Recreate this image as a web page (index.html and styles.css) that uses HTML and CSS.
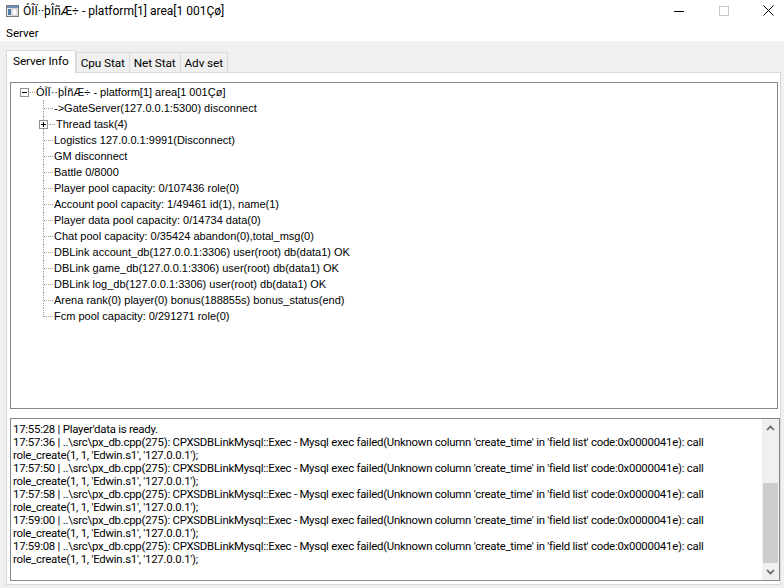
FILE: index.html
```html
<!DOCTYPE html>
<html lang="en">
<head>
  <meta charset="UTF-8" />
  <title>ÓÎÏ··þÎñÆ÷ - platform[1] area[1 001Çø]</title>
  <link rel="stylesheet" href="styles.css">
</head>
<body>

  <div class="titlebar">
    <svg class="app-icon" width="13" height="12" viewBox="0 0 13 12">
      <rect x="0.5" y="0.5" width="12" height="11" fill="#e8e8e8" stroke="#7a7a7a"/>
      <rect x="1" y="1" width="11" height="2" fill="#6a8fb8"/>
      <rect x="2" y="4" width="3" height="6" fill="#4f7db0"/>
      <rect x="6" y="4" width="5" height="6" fill="#ffffff" stroke="#9a9a9a" stroke-width="0.5"/>
    </svg>
    <span class="title">ÓÎÏ··þÎñÆ÷ - platform[1] area[1 001Çø]</span>
    <div class="controls">
      <span class="ctl"><svg width="10" height="10" viewBox="0 0 10 10"><path d="M0 5.5H10" stroke="#000" stroke-width="1"/></svg></span>
      <span class="ctl"><svg width="10" height="10" viewBox="0 0 10 10"><rect x="0.5" y="0.5" width="9" height="9" fill="none" stroke="#c9c9c9"/></svg></span>
      <span class="ctl"><svg width="11" height="11" viewBox="0 0 11 11"><path d="M0.5 0.5L10.5 10.5M10.5 0.5L0.5 10.5" stroke="#000" stroke-width="1"/></svg></span>
    </div>
  </div>

  <div class="menubar">
    <span class="menu-item">Server</span>
  </div>

  <div class="main">
    <div class="tabs">
      <div class="tab active">Server Info</div>
      <div class="tab">Cpu Stat</div>
      <div class="tab">Net Stat</div>
      <div class="tab">Adv set</div>
    </div>

    <div class="panel">
      <div class="tree-box">
        <div class="row root">
          <svg class="expander" width="9" height="9" viewBox="0 0 9 9"><rect x="0.5" y="0.5" width="8" height="8" fill="#fff" stroke="#919191"/><path d="M2 4.5H7" stroke="#000"/></svg>
          <span class="hline short"></span>
          <span class="label">ÓÎÏ··þÎñÆ÷ - platform[1] area[1 001Çø]</span>
        </div>

        <div class="row"><span class="conn"><i></i></span><span class="label">-&gt;GateServer(127.0.0.1:5300) disconnect</span></div>
        <div class="row">
          <span class="exp">
            <i class="seg top"></i>
            <svg class="expander" width="9" height="9" viewBox="0 0 9 9"><rect x="0.5" y="0.5" width="8" height="8" fill="#fff" stroke="#919191"/><path d="M2 4.5H7M4.5 2V7" stroke="#000"/></svg>
            <i class="seg bottom"></i>
          </span>
          <span class="hline"></span>
          <span class="label">Thread task(4)</span>
        </div>
        <div class="row"><span class="conn"><i></i></span><span class="label">Logistics 127.0.0.1:9991(Disconnect)</span></div>
        <div class="row"><span class="conn"><i></i></span><span class="label">GM disconnect</span></div>
        <div class="row"><span class="conn"><i></i></span><span class="label">Battle 0/8000</span></div>
        <div class="row"><span class="conn"><i></i></span><span class="label">Player pool capacity: 0/107436 role(0)</span></div>
        <div class="row"><span class="conn"><i></i></span><span class="label">Account pool capacity: 1/49461 id(1), name(1)</span></div>
        <div class="row"><span class="conn"><i></i></span><span class="label">Player data pool capacity: 0/14734 data(0)</span></div>
        <div class="row"><span class="conn"><i></i></span><span class="label">Chat pool capacity: 0/35424 abandon(0),total_msg(0)</span></div>
        <div class="row"><span class="conn"><i></i></span><span class="label">DBLink account_db(127.0.0.1:3306) user(root) db(data1) OK</span></div>
        <div class="row"><span class="conn"><i></i></span><span class="label">DBLink game_db(127.0.0.1:3306) user(root) db(data1) OK</span></div>
        <div class="row"><span class="conn"><i></i></span><span class="label">DBLink log_db(127.0.0.1:3306) user(root) db(data1) OK</span></div>
        <div class="row"><span class="conn"><i></i></span><span class="label">Arena rank(0) player(0) bonus(188855s) bonus_status(end)</span></div>
        <div class="row"><span class="conn last"><i></i></span><span class="label">Fcm pool capacity: 0/291271 role(0)</span></div>
      </div>

      <div class="log-box">
        <div class="log-text">
          <div>17:55:28 | Player'data is ready.</div>
          <div>17:57:36 | ..\src\px_db.cpp(275): CPXSDBLinkMysql::Exec - Mysql exec failed(Unknown column 'create_time' in 'field list' code:0x0000041e): call<br>role_create(1, 1, 'Edwin.s1', '127.0.0.1');</div>
          <div>17:57:50 | ..\src\px_db.cpp(275): CPXSDBLinkMysql::Exec - Mysql exec failed(Unknown column 'create_time' in 'field list' code:0x0000041e): call<br>role_create(1, 1, 'Edwin.s1', '127.0.0.1');</div>
          <div>17:57:58 | ..\src\px_db.cpp(275): CPXSDBLinkMysql::Exec - Mysql exec failed(Unknown column 'create_time' in 'field list' code:0x0000041e): call<br>role_create(1, 1, 'Edwin.s1', '127.0.0.1');</div>
          <div>17:59:00 | ..\src\px_db.cpp(275): CPXSDBLinkMysql::Exec - Mysql exec failed(Unknown column 'create_time' in 'field list' code:0x0000041e): call<br>role_create(1, 1, 'Edwin.s1', '127.0.0.1');</div>
          <div>17:59:08 | ..\src\px_db.cpp(275): CPXSDBLinkMysql::Exec - Mysql exec failed(Unknown column 'create_time' in 'field list' code:0x0000041e): call<br>role_create(1, 1, 'Edwin.s1', '127.0.0.1');</div>
        </div>
        <div class="vscroll">
          <div class="arrow"><svg width="9" height="6" viewBox="0 0 9 6"><path d="M1 5L4.5 1.5L8 5" fill="none" stroke="#606060" stroke-width="1.6"/></svg></div>
          <div class="track"><div class="thumb"></div></div>
          <div class="arrow"><svg width="9" height="6" viewBox="0 0 9 6"><path d="M1 1L4.5 4.5L8 1" fill="none" stroke="#606060" stroke-width="1.6"/></svg></div>
        </div>
      </div>
    </div>
  </div>

</body>
</html>
```
FILE: styles.css
```css
body {
  margin: 0;
  width: 784px;
  height: 588px;
  overflow: hidden;
  background: #f0f0f0;
  font-family: Roboto, "Liberation Sans", sans-serif;
  font-size: 11.2px;
  letter-spacing: -0.15px;
  color: #000;
}

/* window chrome */
.titlebar {
  height: 21px;
  background: #fff;
  display: flex;
  align-items: center;
}

.app-icon {
  margin-left: 6px;
  margin-right: 4px;
}

.title {
  font-size: 12px;
  letter-spacing: 0;
  flex: 1;
}

.controls {
  display: flex;
  margin-right: -7px;
}

.ctl {
  width: 45px;
  height: 21px;
  display: flex;
  align-items: center;
  justify-content: center;
}

.menubar {
  box-sizing: border-box;
  height: 20px;
  padding-top: 3px;
  background: #fff;
  display: flex;
  align-items: center;
}

.menu-item {
  padding-left: 6px;
  font-size: 11.6px;
  letter-spacing: 0;
}

/* tab control */
.main {
  padding: 9px 3px 4px 6px;
}

.tabs {
  display: flex;
  height: 22px;
  padding-left: 1px;
}

.tab {
  box-sizing: border-box;
  height: 20px;
  margin-top: 2px;
  border: 1px solid #d9d9d9;
  border-bottom: none;
  margin-left: -1px;
  padding: 0 4px 0 4px;
  display: flex;
  align-items: center;
  background: #f0f0f0;
  font-size: 11.8px;
  letter-spacing: -0.1px;
}

.tab.active {
  position: relative;
  z-index: 1;
  margin-top: 0;
  margin-left: -1px;
  height: 23px;
  padding: 0 6px 2px 6px;
  background: #fff;
}

.tab:nth-child(2) {
  margin-left: 0;
}

.panel {
  box-sizing: border-box;
  height: 513px;
  border: 1px solid #d9d9d9;
  background: #fff;
  padding: 9px 0 3px 3px;
}

/* tree view */
.tree-box {
  box-sizing: border-box;
  height: 327px;
  margin-right: 2px;
  border: 1px solid #828790;
  padding: 1px 0 0 9px;
  font-family: "Liberation Sans", Arial, sans-serif;
  font-size: 11px;
  letter-spacing: 0;
}

.row {
  display: flex;
  height: 16px;
  line-height: 16px;
  white-space: nowrap;
}

.root .expander {
  margin-top: 4px;
}

.hline {
  box-sizing: border-box;
  width: 6px;
  height: 9px;
  border-bottom: 1px dotted #a0a0a0;
  margin-right: 1px;
}

.hline.short {
  width: 5px;
  margin-left: 1px;
  margin-right: 1px;
}

.conn {
  box-sizing: border-box;
  width: 11px;
  height: 16px;
  margin-left: 23px;
  border-left: 1px dotted #a0a0a0;
}

.conn.last {
  height: 9px;
}

.conn i {
  display: block;
  box-sizing: border-box;
  height: 9px;
  width: 9px;
  border-bottom: 1px dotted #a0a0a0;
}

.exp {
  display: flex;
  flex-direction: column;
  width: 9px;
  margin-left: 19px;
  margin-right: 1px;
}

.seg {
  display: block;
  width: 0;
  margin-left: 4px;
  border-left: 1px dotted #a0a0a0;
}

.seg.top {
  height: 4px;
}

.seg.bottom {
  height: 3px;
}

/* log output */
.log-box {
  box-sizing: border-box;
  height: 163px;
  margin-top: 9px;
  border: 1px solid #828790;
  display: flex;
}

.log-text {
  flex: 1;
  overflow: hidden;
  padding: 4px 0 0 2px;
  font-size: 11.4px;
  letter-spacing: -0.24px;
  line-height: 13px;
  white-space: nowrap;
}

.vscroll {
  width: 17px;
  display: flex;
  flex-direction: column;
  background: #f0f0f0;
}

.arrow {
  height: 17px;
  display: flex;
  align-items: center;
  justify-content: center;
}

.track {
  flex: 1;
  display: flex;
  flex-direction: column;
  justify-content: flex-end;
  padding: 0 1px;
}

.thumb {
  height: 80px;
  background: #cdcdcd;
}
```
